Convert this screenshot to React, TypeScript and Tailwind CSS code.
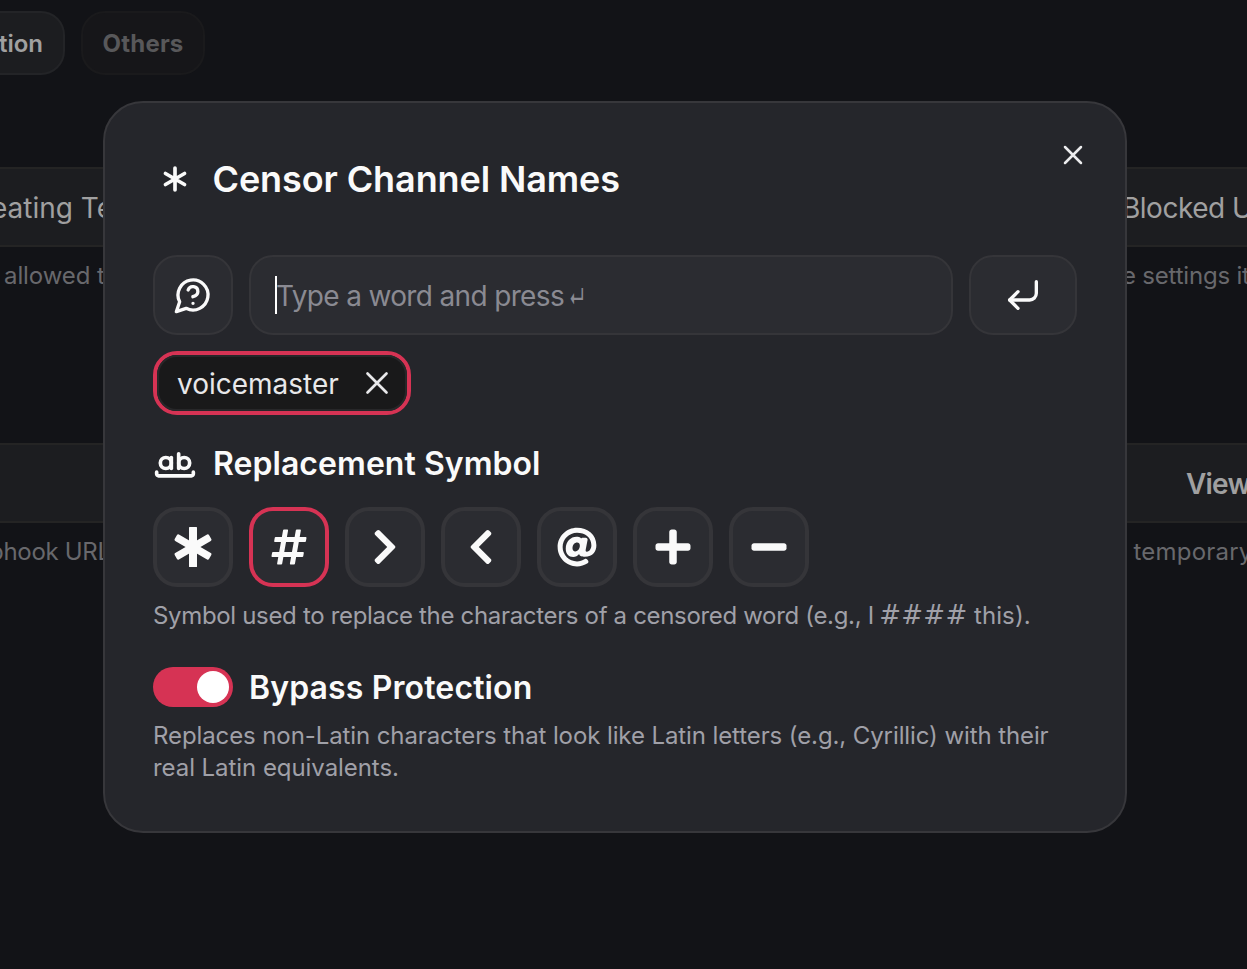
import { useState, type ReactNode } from "react";
import {
  FaAt,
  FaChevronLeft,
  FaChevronRight,
  FaHashtag,
  FaMinus,
  FaPlus,
} from "react-icons/fa";

type StrokeIconProps = { className: string; width?: number; children: ReactNode };

function StrokeIcon({ className, width = 2, children }: StrokeIconProps) {
  return (
    <svg
      className={className}
      viewBox="0 0 24 24"
      fill="none"
      stroke="currentColor"
      strokeWidth={width}
      strokeLinecap="round"
      strokeLinejoin="round"
    >
      {children}
    </svg>
  );
}

function CrossIcon({ className, width }: { className: string; width: number }) {
  return (
    <StrokeIcon className={className} width={width}>
      <path d="M18 6 6 18M6 6l12 12" />
    </StrokeIcon>
  );
}

function BoldAsterisk() {
  return (
    <svg className="size-10" viewBox="0 0 40 40" fill="currentColor">
      <rect x="16" y="0" width="8" height="40" rx="0.5" />
      <rect x="16.3" y="0.2" width="7.4" height="39.6" rx="1.4" transform="rotate(60 20 20)" />
      <rect x="16.3" y="0.2" width="7.4" height="39.6" rx="1.4" transform="rotate(-60 20 20)" />
    </svg>
  );
}

const symbols = [
  { id: "*", icon: <BoldAsterisk /> },
  { id: "#", icon: <FaHashtag /> },
  { id: ">", icon: <FaChevronRight /> },
  { id: "<", icon: <FaChevronLeft /> },
  { id: "@", icon: <FaAt /> },
  { id: "+", icon: <FaPlus /> },
  { id: "-", icon: <FaMinus /> },
];

function Bar({ children }: { children?: ReactNode }) {
  return (
    <div className="flex h-20 items-center overflow-hidden border-y-2 border-[#242424] bg-[#1c1d20] pt-0.5 text-[28px] whitespace-nowrap text-[#a0a0a0]">
      {children}
    </div>
  );
}

function Note({ children }: { children: ReactNode }) {
  return (
    <div className="mt-[13px] h-8 overflow-hidden text-2xl leading-8 whitespace-nowrap text-[#68686c]">
      {children}
    </div>
  );
}

function Dashboard() {
  return (
    <div className="h-full">
      <div className="flex gap-4 pt-[11px] text-2xl font-semibold">
        <div className="flex h-16 w-[65px] items-center justify-end rounded-r-3xl border-2 border-l-0 border-[#232427] bg-[#1c1d20] pt-0.5 pr-5 text-[#a0a0a0]">
          tion
        </div>
        <div className="flex h-16 w-[124px] items-center justify-center rounded-3xl border-2 border-[#1a1a1c] bg-[#161619] pt-0.5 font-bold tracking-[0.2px] text-[#58585a]">
          Others
        </div>
      </div>
      <div className="mt-[92px] grid grid-cols-[615px_632px] gap-y-[151px]">
        <div>
          <Bar>
            <span className="-ml-[9px]">eating Te</span>
          </Bar>
          <Note>
            <span className="ml-1 tracking-[-0.1px]">allowed t</span>
          </Note>
        </div>
        <div>
          <Bar>
            <span className="ml-[507px] tracking-[-0.5px]">Blocked U</span>
          </Bar>
          <Note>
            <span className="ml-[507px] tracking-[-0.2px]">e settings it</span>
          </Note>
        </div>
        <div>
          <Bar />
          <Note>
            <span className="-ml-[11px] tracking-[-0.3px]">bhook URL</span>
          </Note>
        </div>
        <div>
          <Bar>
            <span className="ml-[571px] font-semibold tracking-[-0.8px]">View</span>
          </Bar>
          <Note>
            <span className="ml-[518.5px] tracking-[0.2px]">temporary</span>
          </Note>
        </div>
      </div>
    </div>
  );
}

export default function App() {
  const [symbol, setSymbol] = useState("#");

  return (
    <div className="h-screen overflow-hidden bg-[#121317] font-['Inter','Noto_Sans',sans-serif]">
      <Dashboard />
      <div className="fixed inset-0 flex items-center justify-center pr-[17px] pb-[35px]">
        <section className="relative h-[732px] w-[1024px] rounded-[40px] border-2 border-[#37373b] bg-[#25262b] p-12 text-[#fafafa]">
          <button className="absolute top-9 right-9 text-[#ececee]">
            <CrossIcon className="size-8" width={1.9} />
          </button>

          <h1 className="flex h-14 items-center gap-4 text-4xl font-semibold tracking-[-0.1px]">
            <StrokeIcon className="size-11">
              <path d="M12 6v12M17.196 9 6.804 15M6.804 9l10.392 6" />
            </StrokeIcon>
            <span className="-ml-[0.5px]">Censor Channel Names</span>
          </h1>

          <div className="mt-12 flex gap-4">
            <button className="flex size-20 items-center justify-center rounded-3xl border-2 border-[#353539] bg-[#2b2c31]">
              <StrokeIcon className="size-10">
                <path d="M7.9 20A9 9 0 1 0 4 16.1L2 22Z" />
                <path d="M9.09 9a3 3 0 0 1 5.83 1c0 2-3 3-3 3M12 17h.01" />
              </StrokeIcon>
            </button>
            <div className="flex h-20 flex-1 items-center rounded-3xl border-2 border-[#353539] bg-[#2b2c31] pl-6 text-[28px] text-[#8a8a92]">
              <span className="h-[38px] w-0.5 bg-white" />
              <span className="-ml-px pt-0.5 tracking-[-0.65px]">Type a word and press</span>
              <span className="ml-[5px] inline-block origin-left scale-x-60 pt-1 text-[26px] font-medium">↵</span>
            </div>
            <button className="flex h-20 w-[108px] items-center justify-center rounded-3xl border-2 border-[#353539] bg-[#2b2c31]">
              <StrokeIcon className="size-10">
                <path d="M9 10l-5 5 5 5" />
                <path d="M20 4v7a4 4 0 0 1-4 4H4" />
              </StrokeIcon>
            </button>
          </div>

          <div className="mt-4 flex h-16 w-[258px] rounded-3xl border-4 border-[#d63354]">
            <div className="flex flex-1 items-center justify-between rounded-[20px] border-2 border-[#272729] bg-[#19191a] pr-[9px] pl-[18px] text-[28px] text-[#e8e8ea]">
              <span className="pt-0.5">voicemaster</span>
              <CrossIcon className="size-[38px]" width={1.7} />
            </div>
          </div>

          <h2 className="mt-7 flex h-10 items-center gap-4 text-[32px] font-semibold tracking-[0.05px]">
            <StrokeIcon className="size-11">
              <circle cx="7" cy="12" r="3" />
              <path d="M10 9v6" />
              <circle cx="17" cy="12" r="3" />
              <path d="M14 7v8M22 17v1c0 .5-.5 1-1 1H3c-.5 0-1-.5-1-1v-1" />
            </StrokeIcon>
            <span className="pt-0.5">Replacement Symbol</span>
          </h2>

          <div className="mt-6 flex gap-4">
            {symbols.map(({ id, icon }) => (
              <button
                key={id}
                onClick={() => setSymbol(id)}
                className={`flex size-20 items-center justify-center rounded-3xl border-4 bg-[#2b2c31] text-[40px] ${
                  id === symbol ? "border-[#d63354]" : "border-[#353539]"
                }`}
              >
                {icon}
              </button>
            ))}
          </div>
          <p className="mt-3 h-8 text-2xl leading-8 tracking-[-0.33px] whitespace-nowrap text-[#a0a0a8]">
            Symbol used to replace the characters of a censored word (e.g., I{" "}
            <span className="-ml-px font-['DejaVu_Sans'] text-[26px] tracking-[0.3px]">####</span>{" "}
            <span className="tracking-[0.1px]">this).</span>
          </p>

          <div className="mt-9 flex h-10 items-center gap-4">
            <button className="flex h-10 w-20 items-center justify-end rounded-full bg-[#d63354] p-1">
              <span className="size-8 rounded-full bg-white" />
            </button>
            <span className="pt-0.5 text-[32px] font-semibold tracking-[0.13px]">Bypass Protection</span>
          </div>
          <p className="mt-[13px] text-2xl leading-8 whitespace-nowrap text-[#a0a0a8]">
            <span className="tracking-[-0.1px]">
              Replaces non-Latin characters that look like Latin letters (e.g., Cyrillic) with their
            </span>
            <br />
            <span className="tracking-[-0.06px]">real Latin equivalents.</span>
          </p>
        </section>
      </div>
    </div>
  );
}
